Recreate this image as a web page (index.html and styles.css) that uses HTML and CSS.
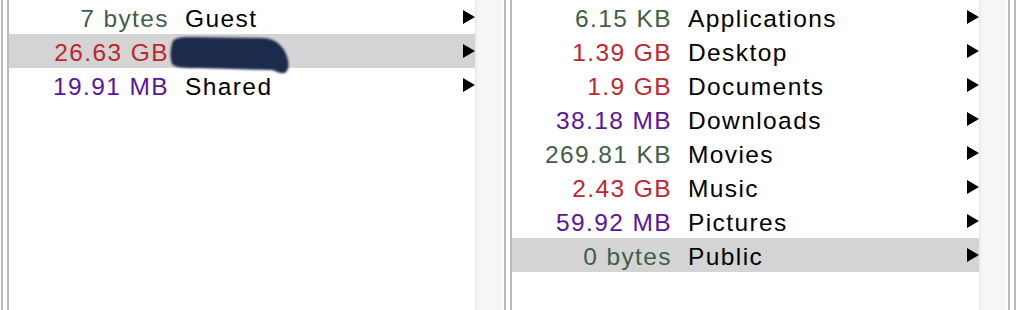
FILE: index.html
```html
<!DOCTYPE html>
<html lang="en">
    <head>
        <meta charset="UTF-8">
        <title>Disk usage browser</title>
        <link rel="stylesheet" href="styles.css">
    </head>
    <body>
        <div class="browser">
            <div class="divider"></div>
            <div class="column first">
                <div class="row">
                    <span class="size small">7 bytes</span>
                    <span class="name">Guest</span>
                    <span class="arrow"></span>
                </div>
                <div class="row selected">
                    <span class="size big">26.63 GB</span>
                    <span class="name">
                        <svg class="redact" width="124" height="42" viewBox="168 34 124 42">
                            <filter id="soft"><feGaussianBlur stdDeviation="0.8"/></filter>
                            <path filter="url(#soft)" d="M172,44 C172,38 180,37 190,37 L262,38 C272,38 279,42 284,50 C289,58 290,69 286,72 C283,75 278,72 272,70 L200,68 C185,68 175,68 172,64 C170,58 170,50 172,44 Z"/>
                        </svg>
                    </span>
                    <span class="arrow"></span>
                </div>
                <div class="row">
                    <span class="size mid">19.91 MB</span>
                    <span class="name">Shared</span>
                    <span class="arrow"></span>
                </div>
            </div>
            <div class="scroller"></div>
            <div class="divider"></div>
            <div class="column second">
                <div class="row">
                    <span class="size small">6.15 KB</span>
                    <span class="name">Applications</span>
                    <span class="arrow"></span>
                </div>
                <div class="row">
                    <span class="size big">1.39 GB</span>
                    <span class="name">Desktop</span>
                    <span class="arrow"></span>
                </div>
                <div class="row">
                    <span class="size big">1.9 GB</span>
                    <span class="name">Documents</span>
                    <span class="arrow"></span>
                </div>
                <div class="row">
                    <span class="size mid">38.18 MB</span>
                    <span class="name">Downloads</span>
                    <span class="arrow"></span>
                </div>
                <div class="row">
                    <span class="size small">269.81 KB</span>
                    <span class="name">Movies</span>
                    <span class="arrow"></span>
                </div>
                <div class="row">
                    <span class="size big">2.43 GB</span>
                    <span class="name">Music</span>
                    <span class="arrow"></span>
                </div>
                <div class="row">
                    <span class="size mid">59.92 MB</span>
                    <span class="name">Pictures</span>
                    <span class="arrow"></span>
                </div>
                <div class="row selected">
                    <span class="size small">0 bytes</span>
                    <span class="name">Public</span>
                    <span class="arrow"></span>
                </div>
            </div>
            <div class="scroller"></div>
            <div class="divider"></div>
        </div>
    </body>
</html>
```

FILE: styles.css
```css
* {
    box-sizing: border-box;
}

body {
    margin: 0;
    background: #fff;
    font-family: "Liberation Sans", Arial, sans-serif;
    font-size: 24.5px;
    letter-spacing: 1.4px;
    color: #000;
}

.browser {
    display: flex;
    flex-direction: row;
    height: 310px;
}

.divider {
    width: 9px;
    border-left: 1px solid #fff;
    position: relative;
}

.divider:before,
.divider:after {
    content: "";
    position: absolute;
    top: 0;
    bottom: 0;
    width: 2px;
    background: #bababa;
}

.divider:before {
    left: 0;
}

.divider:after {
    left: 6px;
}

.column.first {
    width: 466px;
}

.column.second {
    width: 467px;
}

.scroller {
    width: 28px;
    background: #f6f6f6;
    border-left: 2px solid #ececec;
    border-right: 2px solid #fafafa;
}

.row {
    display: flex;
    flex-direction: row;
    align-items: flex-start;
    height: 34px;
    padding-top: 3px;
    line-height: 31px;
    white-space: nowrap;
}

.row.selected {
    background: #d4d4d4;
}

.size {
    width: 160px;
    text-align: right;
}

.small {
    color: #3f5f47;
}

.big {
    color: #c0262e;
}

.mid {
    color: #5c14a0;
}

.name {
    flex: 1;
    margin-left: 16px;
    position: relative;
}

.redact {
    position: absolute;
    top: -3px;
    left: -17px;
    fill: #1f2c4c;
    overflow: visible;
}

.arrow {
    width: 0;
    height: 0;
    margin-top: 7px;
    border-left: 12px solid #000;
    border-top: 7px solid transparent;
    border-bottom: 7px solid transparent;
}
```
